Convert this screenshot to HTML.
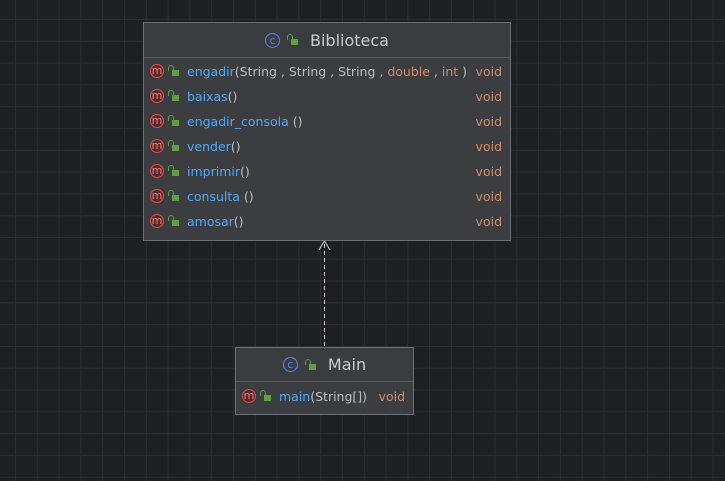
<!DOCTYPE html>
<html><head><meta charset="utf-8"><style>
html,body{margin:0;padding:0}
body{width:725px;height:481px;overflow:hidden;position:relative;background-color:#1e1f22;
background-image:linear-gradient(to right,#2c2d30 1px,transparent 1px),linear-gradient(to bottom,#2c2d30 1px,transparent 1px);
background-size:21.8px 21.8px;background-position:15px 19px;
font-family:"DejaVu Sans","Liberation Sans",sans-serif;}
.box{position:absolute;background:#3b3d40;border:1px solid #6c6f75;box-sizing:border-box}
.hd{position:absolute;left:0;right:0;top:0;border-bottom:1px solid #55585d;background:#3a3c3f;color:#c9ccd1;font-size:16px;display:flex;align-items:center;justify-content:center}
.row{position:absolute;left:0;right:0;height:25px;font-size:12.5px;color:#bcbec4;display:flex;align-items:center}
.mi{position:absolute;top:5px;width:12px;height:12px;border:1.5px solid #d9504f;border-radius:50%;background:#5a2a2a;color:#f08080;font-size:11px;line-height:11px;text-align:center;box-sizing:content-box}
.lk{position:absolute;width:7px;height:6px;background:#5fa142}
.lk:before{content:"";position:absolute;left:-4px;top:-5px;width:4px;height:5px;border:1.5px solid #5fa142;border-bottom:none;border-radius:3px 3px 0 0}
.n{color:#56a8f5}.v{color:#cf8e6d}
.ci{width:13px;height:13px;border:1.5px solid #548af7;border-radius:50%;color:#548af7;font-size:11px;line-height:13px;text-align:center;display:inline-block;margin-right:9px}
.t{position:absolute;left:43px;white-space:pre}
.vd{position:absolute;right:8px}
</style></head><body>
<svg style="position:absolute;left:0;top:0" width="725" height="481">
<line x1="324.5" y1="244" x2="324.5" y2="347" stroke="#cfd1d4" stroke-width="1" stroke-dasharray="4,3"/>
<polyline points="319,250 324.5,241 330,250" fill="none" stroke="#cfd1d4" stroke-width="1"/>
</svg>
<div class="box" style="left:143px;top:22px;width:368px;height:219px">
<div class="hd" style="height:34px"><span class="ci">c</span><span class="lk" style="position:relative;display:inline-block;margin-right:14px;top:2px;left:2px"></span>Biblioteca</div>
<div style="position:absolute;top:36px;left:0;right:0">
<div class="row" style="top:0"><span class="mi" style="left:6px">m</span><span class="lk" style="left:28px;top:11px"></span><span class="t"><span class="n">engadir</span>(String , String , String , <span class="v">double</span> , <span class="v">int</span> )</span><span class="vd v">void</span></div>
<div class="row" style="top:25px"><span class="mi" style="left:6px">m</span><span class="lk" style="left:28px;top:11px"></span><span class="t"><span class="n">baixas</span>()</span><span class="vd v">void</span></div>
<div class="row" style="top:50px"><span class="mi" style="left:6px">m</span><span class="lk" style="left:28px;top:11px"></span><span class="t"><span class="n">engadir_consola</span> ()</span><span class="vd v">void</span></div>
<div class="row" style="top:75px"><span class="mi" style="left:6px">m</span><span class="lk" style="left:28px;top:11px"></span><span class="t"><span class="n">vender</span>()</span><span class="vd v">void</span></div>
<div class="row" style="top:100px"><span class="mi" style="left:6px">m</span><span class="lk" style="left:28px;top:11px"></span><span class="t"><span class="n">imprimir</span>()</span><span class="vd v">void</span></div>
<div class="row" style="top:125px"><span class="mi" style="left:6px">m</span><span class="lk" style="left:28px;top:11px"></span><span class="t"><span class="n">consulta</span> ()</span><span class="vd v">void</span></div>
<div class="row" style="top:150px"><span class="mi" style="left:6px">m</span><span class="lk" style="left:28px;top:11px"></span><span class="t"><span class="n">amosar</span>()</span><span class="vd v">void</span></div>
</div></div>
<div class="box" style="left:235px;top:347px;width:179px;height:68px">
<div class="hd" style="height:33px"><span class="ci">c</span><span class="lk" style="position:relative;display:inline-block;margin-right:14px;top:2px;left:2px"></span>Main</div>
<div class="row" style="top:36px"><span class="mi" style="left:6px">m</span><span class="lk" style="left:28px;top:11px"></span><span class="t"><span class="n">main</span>(String[])</span><span class="vd v">void</span></div>
</div>
</body></html>
